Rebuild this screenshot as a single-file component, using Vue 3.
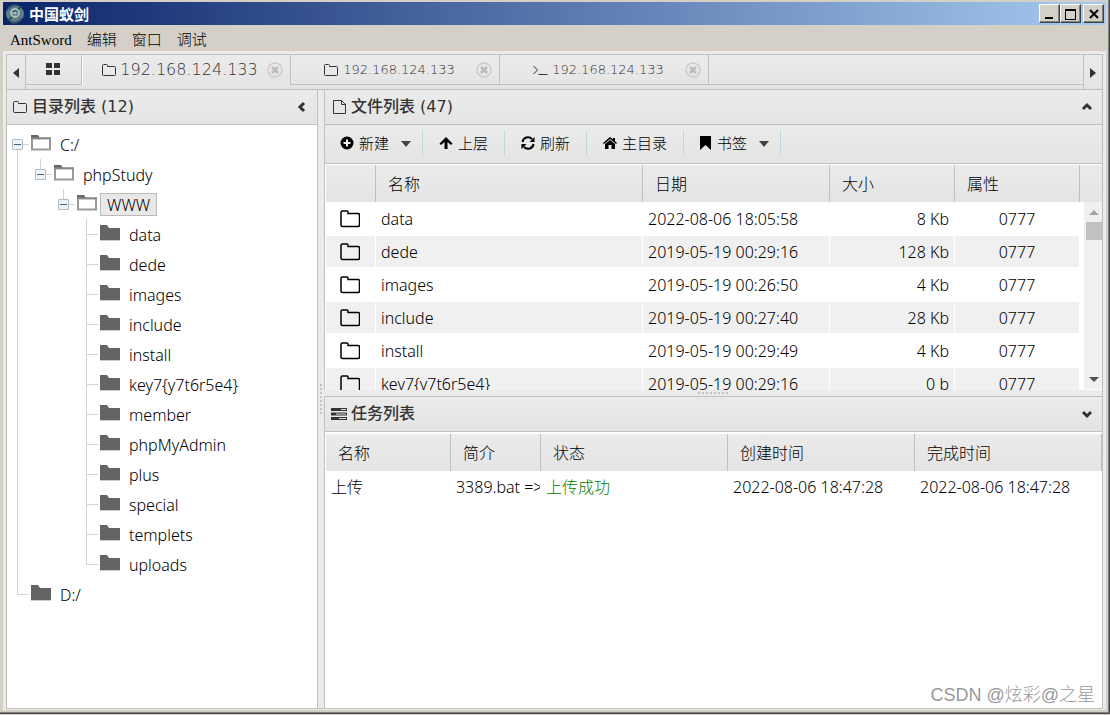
<script setup>
const menus = ['AntSword', '编辑', '窗口', '调试']
const tabs = [
  { icon: 'folder', label: '192.168.124.133', active: true },
  { icon: 'folder', label: '192.168.124.133', active: false },
  { icon: 'terminal', label: '192.168.124.133', active: false },
]
const leaves = [
  'data', 'dede', 'images', 'include', 'install', 'key7{y7t6r5e4}',
  'member', 'phpMyAdmin', 'plus', 'special', 'templets', 'uploads',
]
const tools = [
  { icon: 'plus', label: '新建', menu: true },
  { icon: 'up', label: '上层' },
  { icon: 'refresh', label: '刷新' },
  { icon: 'home', label: '主目录' },
  { icon: 'bookmark', label: '书签', menu: true },
]
const files = [
  ['data', '2022-08-06 18:05:58', '8 Kb', '0777'],
  ['dede', '2019-05-19 00:29:16', '128 Kb', '0777'],
  ['images', '2019-05-19 00:26:50', '4 Kb', '0777'],
  ['include', '2019-05-19 00:27:40', '28 Kb', '0777'],
  ['install', '2019-05-19 00:29:49', '4 Kb', '0777'],
  ['key7{y7t6r5e4}', '2019-05-19 00:29:16', '0 b', '0777'],
]
</script>

<template>
  <div class="desktop">
    <div class="window">
      <header class="titlebar">
        <svg class="logo" viewBox="0 0 20 20" width="20" height="20">
          <circle cx="10" cy="10" r="9" fill="#5f7f8b" />
          <path d="M3 5.500A9 9 0 0 1 12 1.500M17 14A9 9 0 0 1 6 18" fill="none" stroke="#39566a" stroke-width="2" />
          <circle cx="10" cy="9" r="4" fill="none" stroke="#b9ccd0" stroke-width="1.500" />
          <path d="M2 18L7 13M10 6v6M8 8h4M13 5l4-3" stroke="#1d3d52" stroke-width="1.500" />
          <path d="M10 7v5M7 9h5" stroke="#c7d8db" />
        </svg>
        <h1>中国蚁剑</h1>
        <div class="window-buttons">
          <button aria-label="最小化"><svg viewBox="0 0 16 14" width="16" height="14"><path d="M3 10h8v2H3z" /></svg></button>
          <button aria-label="最大化"><svg viewBox="0 0 16 14" width="16" height="14"><path fill-rule="evenodd" d="M2 2h11v11H2zM3 4h9v8H3z" /></svg></button>
          <button class="quit" aria-label="关闭"><svg viewBox="0 0 16 14" width="16" height="14"><path d="M4 3l8 8M12 3l-8 8" fill="none" stroke="#000" stroke-width="2" /></svg></button>
        </div>
      </header>

      <nav class="menubar">
        <button v-for="m in menus" :key="m">{{ m }}</button>
      </nav>

      <main class="client">
        <div class="frame">
          <div class="tabbar">
            <button class="scroll-tab" aria-label="向左"><svg viewBox="0 0 6 10" width="6" height="10"><path d="M6 0v10L0 5z" /></svg></button>
            <button class="home-tab" aria-label="主页">
              <svg viewBox="0 0 14 12" width="14" height="12"><path d="M0 0h6v5H0zM8 0h6v5H8zM0 7h6v5H0zM8 7h6v5H8z" /></svg>
            </button>
            <div v-for="(t, i) in tabs" :key="i" class="tab" :class="{ active: t.active }">
              <button class="tab-label">
                <svg v-if="t.icon === 'folder'" viewBox="0 0 16 14" width="16" height="14"><path class="line" d="M1.500 2.500q0-1 1-1h3q1 0 1 1v1h7q1 0 1 1v7q0 1-1 1h-11q-1 0-1-1z" /></svg>
                <svg v-else viewBox="0 0 16 14" width="16" height="14"><path class="line" d="M1.500 3l4 4-4 4M6.500 11.500h9" /></svg>
                {{ t.label }}
              </button>
              <button class="tab-close" aria-label="关闭标签">
                <svg viewBox="0 0 16 16" width="16" height="16"><circle cx="8" cy="8" r="7" fill="none" stroke="#ccc" stroke-width="1.500" /><path d="M5 5l6 6M11 5l-6 6" stroke="#bbb" stroke-width="2.500" /></svg>
              </button>
            </div>
            <div class="tab-space"></div>
            <button class="scroll-tab right" aria-label="向右"><svg viewBox="0 0 6 10" width="6" height="10"><path d="M0 0v10l6-5z" /></svg></button>
          </div>

          <div class="panes">
            <section class="side">
              <div class="panel-head">
                <svg viewBox="0 0 16 14" width="16" height="14"><path class="line" d="M1.500 2.500q0-1 1-1h3q1 0 1 1v1h7q1 0 1 1v7q0 1-1 1h-11q-1 0-1-1z" /></svg>
                <h2>目录列表 (12)</h2>
                <button class="fold" aria-label="折叠"><svg viewBox="0 0 12 12" width="12" height="12"><path d="M8 2L4 6l4 4" class="chev" /></svg></button>
              </div>
              <ul class="tree">
                <li class="root">
                  <div class="node">
                    <button class="toggle" aria-label="折叠"></button>
                    <svg class="folder" viewBox="0 0 20 16" width="20" height="16"><path d="M0 0h7l2 3H0z" fill="#666" /><path d="M1 3.500h18v11H1z" fill="#fff" stroke="#999" stroke-width="2" /><path d="M0 3h20" stroke="#777" /></svg>
                    <button class="name">C:/</button>
                  </div>
                  <ul>
                    <li>
                      <div class="node">
                        <button class="toggle" aria-label="折叠"></button>
                        <svg class="folder" viewBox="0 0 20 16" width="20" height="16"><path d="M0 0h7l2 3H0z" fill="#666" /><path d="M1 3.500h18v11H1z" fill="#fff" stroke="#999" stroke-width="2" /><path d="M0 3h20" stroke="#777" /></svg>
                        <button class="name">phpStudy</button>
                      </div>
                      <ul>
                        <li>
                          <div class="node">
                            <button class="toggle" aria-label="折叠"></button>
                            <svg class="folder" viewBox="0 0 20 16" width="20" height="16"><path d="M0 0h7l2 3H0z" fill="#666" /><path d="M1 3.500h18v11H1z" fill="#fff" stroke="#999" stroke-width="2" /><path d="M0 3h20" stroke="#777" /></svg>
                            <button class="name selected">WWW</button>
                          </div>
                          <ul>
                            <li v-for="l in leaves" :key="l">
                              <div class="node">
                                <span class="stub"></span>
                                <svg class="folder" viewBox="0 0 20 16" width="20" height="16"><path d="M0 0h7l2 3h11v12H0z" fill="#646464" /><path d="M0 15.500h20" stroke="#ccc" /></svg>
                                <button class="name">{{ l }}</button>
                              </div>
                            </li>
                          </ul>
                        </li>
                      </ul>
                    </li>
                  </ul>
                </li>
                <li>
                  <div class="node">
                    <span class="stub"></span>
                    <svg class="folder" viewBox="0 0 20 16" width="20" height="16"><path d="M0 0h7l2 3h11v12H0z" fill="#646464" /><path d="M0 15.500h20" stroke="#ccc" /></svg>
                    <button class="name">D:/</button>
                  </div>
                </li>
              </ul>
            </section>

            <div class="split-v"><i></i></div>

            <div class="work">
              <section class="files">
                <div class="panel-head">
                  <svg viewBox="0 0 16 16" width="16" height="16"><path class="line" d="M2.500 1.500h8l4 4v9h-12zM10.500 1.500v4h4" /></svg>
                  <h2>文件列表 (47)</h2>
                  <button class="fold" aria-label="折叠"><svg viewBox="0 0 12 12" width="12" height="12"><path d="M2 8l4-4 4 4" class="chev" /></svg></button>
                </div>
                <div class="toolbar">
                  <button v-for="t in tools" :key="t.label" class="tool">
                    <svg v-if="t.icon === 'plus'" viewBox="0 0 14 14" width="14" height="14"><circle cx="7" cy="7" r="6.500" /><path d="M7 3.500v7M3.500 7h7" stroke="#eee" stroke-width="2" /></svg>
                    <svg v-else-if="t.icon === 'up'" viewBox="0 0 14 14" width="14" height="14"><path d="M7 1l6.500 6.500-1.500 1.500-3.500-3v7h-3v-7L2 9 .5 7.500z" /></svg>
                    <svg v-else-if="t.icon === 'refresh'" viewBox="0 0 14 14" width="14" height="14"><path d="M1.500 6A5.500 5.500 0 0 1 11 3M12.500 8A5.500 5.500 0 0 1 3 11" fill="none" stroke="#000" stroke-width="2" /><path d="M13.500 1v5h-5zM.5 13V8h5z" /></svg>
                    <svg v-else-if="t.icon === 'home'" viewBox="0 0 14 14" width="14" height="14"><path d="M0 7l7-6 3 2.500V2h2v3l2 2-1 1-6-5-6 5z" /><path d="M2 8l5-4 5 4v5H8.500V9h-3v4H2z" /></svg>
                    <svg v-else viewBox="0 0 14 14" width="14" height="14"><path d="M2 0h11v14l-5.500-5L2 14z" /></svg>
                    <span>{{ t.label }}</span>
                    <svg v-if="t.menu" class="caret" viewBox="0 0 10 6" width="10" height="6"><path d="M0 0h10L5 6z" fill="#444" /></svg>
                  </button>
                </div>
                <div class="grid">
                  <table>
                    <colgroup><col class="w-icon" /><col /><col class="w-date" /><col class="w-size" /><col class="w-size" /><col class="w-bar" /></colgroup>
                    <thead>
                      <tr><th></th><th>名称</th><th>日期</th><th>大小</th><th>属性</th><th></th></tr>
                    </thead>
                    <tbody class="rows">
                      <tr v-for="f in files" :key="f[0]">
                        <td class="ico"><svg viewBox="0 0 20 18" width="20" height="18"><path d="M1 2.500q0-1.500 1.500-1.500H7q1 0 1 1.500v1h10q1.500 0 1.500 1.500v10q0 1.500-1.500 1.500H2.500Q1 16.500 1 15z" fill="none" stroke="#000" stroke-width="1.500" /></svg></td>
                        <td>{{ f[0] }}</td>
                        <td>{{ f[1] }}</td>
                        <td class="num">{{ f[2] }}</td>
                        <td class="mid">{{ f[3] }}</td>
                        <td class="blank"></td>
                      </tr>
                    </tbody>
                  </table>
                  <div class="scrollbar">
                    <svg viewBox="0 0 10 5" width="10" height="5"><path d="M5 0l5 5H0z" fill="#a3a3a3" /></svg>
                    <i></i>
                    <svg class="down" viewBox="0 0 10 5" width="10" height="5"><path d="M0 0h10L5 5z" fill="#505050" /></svg>
                  </div>
                </div>
              </section>

              <div class="split-h"><i></i></div>

              <section class="tasks">
                <div class="panel-head">
                  <svg viewBox="0 0 16 14" width="16" height="14"><path fill="#333" d="M0 1h16v3H0zM0 5.500h16v3H0zM0 10h16v3H0z" /><path d="M10 2.500h5M5 7h10M8 11.500h7" stroke="#ddd" /></svg>
                  <h2>任务列表</h2>
                  <button class="fold" aria-label="折叠"><svg viewBox="0 0 12 12" width="12" height="12"><path d="M2 4l4 4 4-4" class="chev" /></svg></button>
                </div>
                <div class="grid">
                  <table>
                    <colgroup><col class="w-size" /><col class="w-intro" /><col /><col class="w-date" /><col class="w-date" /></colgroup>
                    <thead>
                      <tr><th>名称</th><th>简介</th><th>状态</th><th>创建时间</th><th>完成时间</th></tr>
                    </thead>
                    <tbody>
                      <tr>
                        <td>上传</td>
                        <td>3389.bat =&gt;</td>
                        <td class="ok">上传成功</td>
                        <td>2022-08-06 18:47:28</td>
                        <td>2022-08-06 18:47:28</td>
                      </tr>
                    </tbody>
                  </table>
                </div>
              </section>
            </div>
          </div>
        </div>
      </main>
    </div>
    <div class="watermark">CSDN @炫彩@之星</div>
  </div>
</template>

<style>
body {
  margin: 0;
}
</style>

<style scoped>
* {
  box-sizing: border-box;
}
.desktop {
  position: relative;
  height: 100vh;
  padding-bottom: 1px;
  background: #d4d0c8;
  color: #000;
  font: 300 16px/20px "Noto Sans", "Noto Sans CJK SC", sans-serif;
  overflow: hidden;
}
button {
  margin: 0;
  padding: 0;
  border: 0;
  background: none;
  color: inherit;
  font: inherit;
}
svg {
  display: block;
  flex: none;
}
h1,
h2,
ul {
  margin: 0;
  padding: 0;
}
.window {
  display: flex;
  flex-direction: column;
  height: 100%;
  padding: 2px 2px 2px 3px;
  border: solid #484848;
  border-width: 0 1px 1px 0;
  box-shadow: inset -1px -1px #808080;
}
.titlebar {
  display: flex;
  align-items: center;
  flex: none;
  height: 23px;
  margin-right: 1px;
  padding: 0 2px;
  background: linear-gradient(90deg, #0a246a, #a6caf0);
}
.titlebar h1 {
  flex: 1;
  margin-left: 4px;
  color: #fff;
  font-size: 15px;
  font-weight: 700;
}
.window-buttons {
  display: flex;
}
.window-buttons button {
  width: 21px;
  height: 19px;
  padding: 1px 2px;
  background: #d4d0c8;
  border: 1px solid;
  border-color: #fff #404040 #404040 #fff;
  box-shadow: inset -1px -1px #808080;
}
.window-buttons .quit {
  margin-left: 2px;
}
.menubar {
  display: flex;
  align-items: center;
  flex: none;
  gap: 15px;
  height: 26px;
  padding: 3px 7px 0;
  font-family: "Liberation Serif", "Noto Sans CJK SC", serif;
  font-size: 15px;
}
.client {
  flex: 1;
  min-height: 0;
  margin-right: 1px;
  margin-bottom: 1px;
  padding: 3px 3px 1px;
  background: #ebebeb;
}
.frame {
  display: flex;
  flex-direction: column;
  height: 100%;
  border: 1px solid #c0c0c0;
}
.tabbar {
  display: flex;
  flex: none;
  height: 35px;
  border-bottom: 1px solid #c0c0c0;
  background: linear-gradient(#ebebeb, #e4e4e4);
  color: #333;
  font-family: "DejaVu Sans", sans-serif;
  font-size: 13px;
}
.scroll-tab {
  display: flex;
  align-items: center;
  justify-content: center;
  width: 19px;
  padding-top: 2px;
  border-right: 1px solid #c0c0c0;
}
.scroll-tab.right {
  border-right: 0;
  border-left: 1px solid #c0c0c0;
}
.home-tab,
.tab,
.tab-space {
  height: 30px;
  border-right: 1px solid #c0c0c0;
  border-bottom: 1px solid #c0c0c0;
}
.tab-space {
  flex: 1;
  border-right: 0;
}
.home-tab {
  display: flex;
  justify-content: center;
  width: 56px;
  padding: 8px 2px 0 0;
}
.home-tab path,
.scroll-tab path {
  fill: #333;
}
.tab {
  display: flex;
  align-items: center;
  width: 209px;
  padding: 0 7px;
}
.tab-label {
  display: flex;
  flex: 1;
  align-items: center;
  justify-content: center;
  gap: 4px;
  padding-left: 4px;
}
.active {
  border-bottom: 0;
  border-left: 1px solid #fff;
  font-size: 16px;
}
.active .tab-label {
  gap: 3px;
  padding-left: 2px;
}
.line {
  fill: none;
  stroke: #333;
}
.chev {
  fill: none;
  stroke: #333;
  stroke-width: 3;
}
.panes {
  display: flex;
  flex: 1;
  min-height: 0;
}
.side {
  display: flex;
  flex-direction: column;
  width: 28.4%;
  border-right: 1px solid #c0c0c0;
  background: #fff;
}
.panel-head {
  display: flex;
  align-items: center;
  flex: none;
  gap: 4px;
  height: 35px;
  padding: 0 9px 0 5px;
  border-bottom: 1px solid #c0c0c0;
  background: linear-gradient(#ebebeb, #e4e4e4);
  color: #333;
}
.panel-head h2 {
  flex: 1;
  font: 500 16px/20px "DejaVu Sans", "Noto Sans CJK SC", sans-serif;
}
.work .panel-head {
  padding-left: 6px;
}
.tree {
  padding-top: 4px;
}
ul {
  list-style: none;
}
.tree ul {
  margin-left: 23px;
}
.tree li {
  position: relative;
}
.tree li::before,
.tree li::after {
  position: absolute;
  top: 0;
  left: 10px;
  content: "";
}
.tree li::before {
  height: 100%;
  border-left: 1px solid #d4d4d4;
}
.tree li:last-child::before {
  height: 15px;
}
.tree li.root::before {
  top: 15px;
  height: calc(100% - 15px);
}
.tree li::after {
  top: 15px;
  width: 12px;
  border-top: 1px solid #d4d4d4;
}
.node {
  display: flex;
  align-items: center;
  height: 30px;
}
.toggle {
  position: relative;
  z-index: 1;
  display: flex;
  align-items: center;
  justify-content: center;
  width: 11px;
  height: 11px;
  margin: 0 8px 0 5px;
  border: 1px solid #a9bcc8;
  border-radius: 1px;
  background: #edf3f6;
}
.toggle::before {
  width: 7px;
  border-top: 1px solid #3d6780;
  content: "";
}
.stub {
  width: 24px;
}
.folder {
  margin-bottom: 2px;
}
.name {
  margin-left: 3px;
  padding: 1px 5px 0;
  border: 1px solid transparent;
  line-height: 20px;
}
.selected {
  padding: 1px 6px 0;
  border-color: #bbb;
  background: #e8e8e8;
}
.split-v {
  display: flex;
  align-items: center;
  justify-content: center;
  width: 6px;
  background: #ebebeb;
}
.split-v i {
  height: 30px;
  border-left: 2px dotted #c4c4c4;
}
.work {
  display: grid;
  flex: 1;
  grid-template-rows: 300fr 6px 312fr;
  min-width: 0;
}
.files,
.tasks {
  display: flex;
  flex-direction: column;
  min-height: 0;
  border-left: 1px solid #c0c0c0;
  background: #fff;
}
.tasks {
  border-top: 1px solid #c0c0c0;
}
.split-h {
  display: flex;
  align-items: center;
  justify-content: center;
  background: #ebebeb;
}
.split-h i {
  width: 30px;
  border-top: 2px dotted #c4c4c4;
}
.toolbar {
  display: flex;
  align-items: center;
  flex: none;
  height: 39px;
  padding: 0 0 2px 1px;
  border-bottom: 1px solid #c0c0c0;
  background: linear-gradient(#ebebeb, #e4e4e4);
}
.tool {
  display: flex;
  align-items: center;
  gap: 5px;
  height: 26px;
  padding: 0 16px;
  border-right: 1px solid #bfd8e0;
  font-size: 15px;
}
.tool:first-child {
  padding-left: 14px;
}
.tool:last-child {
  padding-left: 14px;
}
.caret {
  margin: 2px -5px 0 7px;
}
.grid {
  position: relative;
  flex: 1;
  min-height: 0;
  padding: 1px 0 0 1px;
  overflow: hidden;
}
.tasks .grid {
  padding-top: 2px;
}
table {
  width: 100%;
  border-collapse: separate;
  border-spacing: 0;
  table-layout: fixed;
}
.w-icon {
  width: 50px;
}
.w-date {
  width: 187px;
}
.w-size {
  width: 125px;
}
.w-bar {
  width: 22px;
}
.w-intro {
  width: 90px;
}
th {
  height: 37px;
  padding: 0 0 0 12px;
  border-right: 1px solid #c0c0c0;
  background: linear-gradient(#ebebeb, #e4e4e4);
  font-weight: 300;
  text-align: left;
}
.files th:last-child {
  border-right: 0;
}
td {
  height: 33px;
  padding: 0 5px;
  border-right: 1px solid #fff;
  border-bottom: 2px solid #fff;
  white-space: nowrap;
  overflow: hidden;
}
.rows tr:nth-child(even) td {
  background: #f0f0f0;
}
.rows tr td.blank {
  background: #fff;
}
.rows tr:first-child td {
  height: 34px;
  padding-top: 1px;
}
.ico svg {
  margin: 0 auto;
}
.num {
  text-align: right;
}
.mid {
  text-align: center;
}
.ok {
  color: #008000;
}
.scrollbar {
  position: absolute;
  top: 38px;
  right: 0;
  bottom: 1px;
  display: flex;
  flex-direction: column;
  align-items: center;
  width: 18px;
  padding: 8px 0 7px 2px;
  background: #f0f0f0;
}
.scrollbar i {
  width: 16px;
  height: 18px;
  margin-top: 7px;
  background: #c1c1c1;
}
.scrollbar .down {
  margin-top: auto;
}
.watermark {
  position: absolute;
  right: 15px;
  bottom: 8px;
  color: #999;
  font: 300 18px/24px "Liberation Sans", "Noto Sans CJK SC", sans-serif;
}
</style>
